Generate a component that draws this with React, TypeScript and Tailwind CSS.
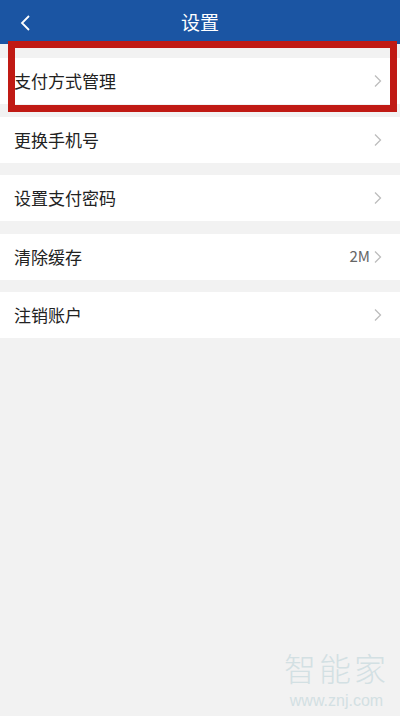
import React from "react";

const Chevron = () => (
  <svg width="10" height="16" viewBox="0 0 10 16" className="shrink-0">
    <path d="M2 2.5 L7.5 8 L2 13.5" fill="none" stroke="#bdbdbd" strokeWidth="1.3" />
  </svg>
);

const Row = ({ label, value }: { label: string; value?: string }) => (
  <div className="h-[46px] bg-white flex items-center justify-between pl-[14px] pr-[17px]">
    <span className="text-[17px] text-[#222]">{label}</span>
    <div className="flex items-center gap-[3px]">
      {value && <span className="text-[15px] text-[#666]">{value}</span>}
      <Chevron />
    </div>
  </div>
);

export default function App() {
  return (
    <div
      className="relative w-[400px] h-[716px] bg-[#f2f2f2] overflow-hidden"
      style={{ fontFamily: '"Noto Sans CJK SC", "Noto Sans", sans-serif' }}
    >
      <div className="h-[44px] bg-[#1b55a3] flex items-center relative">
        <div className="absolute left-[19px] top-[14px]">
          <svg width="12" height="18" viewBox="0 0 12 18">
            <path d="M10 2 L3 9 L10 16" fill="none" stroke="#ffffff" strokeWidth="1.8" />
          </svg>
        </div>
        <div className="flex-1 text-center text-white text-[19px]">设置</div>
      </div>
      <div className="flex flex-col gap-[12.5px] pt-[14px]">
        <Row label="支付方式管理" />
        <Row label="更换手机号" />
        <Row label="设置支付密码" />
        <Row label="清除缓存" value="2M" />
        <Row label="注销账户" />
      </div>
      <div className="absolute left-[8px] top-[41px] w-[389px] h-[71px] border-[7px] border-[#c01a14]" />
      <div className="absolute right-[11px] bottom-[6px] flex flex-col items-center text-[#d3e0e3]">
        <span className="text-[32px] leading-[34px] tracking-[3px] font-light">智能家</span>
        <span
          className="text-[16px] leading-[18px] mt-[8px]"
          style={{ fontFamily: '"Liberation Sans", sans-serif' }}
        >
          www.znj.com
        </span>
      </div>
    </div>
  );
}
